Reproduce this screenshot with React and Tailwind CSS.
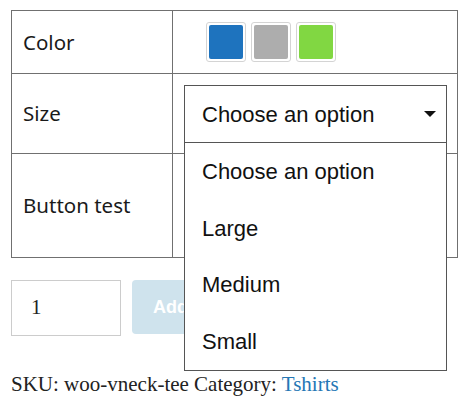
export default function App() {
  const label = "px-[11px] flex items-center text-[20.5px] text-[#1a1a1a] [font-family:'Noto_Sans',sans-serif]";
  return (
    <div className="pt-[10px] pl-[11px] bg-white min-h-[408px]">
      <div className="w-[447px] border border-[#707070]">
        <div className="flex h-[62px]">
          <div className={`w-[161px] border-r border-[#707070] ${label}`}>Color</div>
          <div className="flex-1 flex items-start pt-[11px] pl-[33px] gap-[5px]">
            {["#1e73be", "#adadad", "#81d742"].map((c) => (
              <div key={c} className="w-[40px] h-[40px] border border-[#d4d4d4] rounded-[3px] p-[2px]">
                <div className="w-full h-full rounded-[2px]" style={{ background: c }} />
              </div>
            ))}
          </div>
        </div>
        <div className="flex h-[80px] border-t border-[#707070]">
          <div className={`w-[161px] border-r border-[#707070] ${label}`}>Size</div>
          <div className="flex-1 pt-[11px] pl-[11px]">
            <div className="relative w-[263px] h-[58px] border border-[#555] flex items-center pl-[17px] text-[22px] text-[#111] [font-family:'Liberation_Sans',Arial,sans-serif] bg-white">
              Choose an option
              <svg className="absolute left-[239px] top-[25px]" width="12" height="6" viewBox="0 0 12 6">
                <path d="M0 0H12L6 6Z" fill="#111" />
              </svg>
              <div className="absolute left-[-1px] top-[56px] w-[263px] h-[229px] border border-[#555] bg-white z-10 flex flex-col pt-0">
                {["Choose an option", "Large", "Medium", "Small"].map((o) => (
                  <div key={o} className="h-[57px] flex items-center pl-[17px]">{o}</div>
                ))}
              </div>
            </div>
          </div>
        </div>
        <div className="flex h-[104px] border-t border-[#707070]">
          <div className={`w-[161px] border-r border-[#707070] ${label}`}>Button test</div>
          <div className="flex-1" />
        </div>
      </div>
      <div className="flex mt-[22px] gap-[11px] items-start">
        <div className="w-[110px] h-[56px] border border-[#cccccc] flex items-center pl-[19px] text-[21px] text-[#222] [font-family:'Liberation_Serif',serif]">1</div>
        <div className="h-[54px] w-[200px] rounded-[4px] bg-[#cfe3ed] flex items-center pl-[21px] text-white font-bold text-[18px] [font-family:'Liberation_Sans',Arial,sans-serif]">Add to cart</div>
      </div>
      <div className="mt-[38px] text-[21px] text-[#222] [font-family:'Liberation_Serif',serif] leading-none">
        SKU: woo-vneck-tee Category: <span className="text-[#2577b5]">Tshirts</span>
      </div>
    </div>
  );
}
